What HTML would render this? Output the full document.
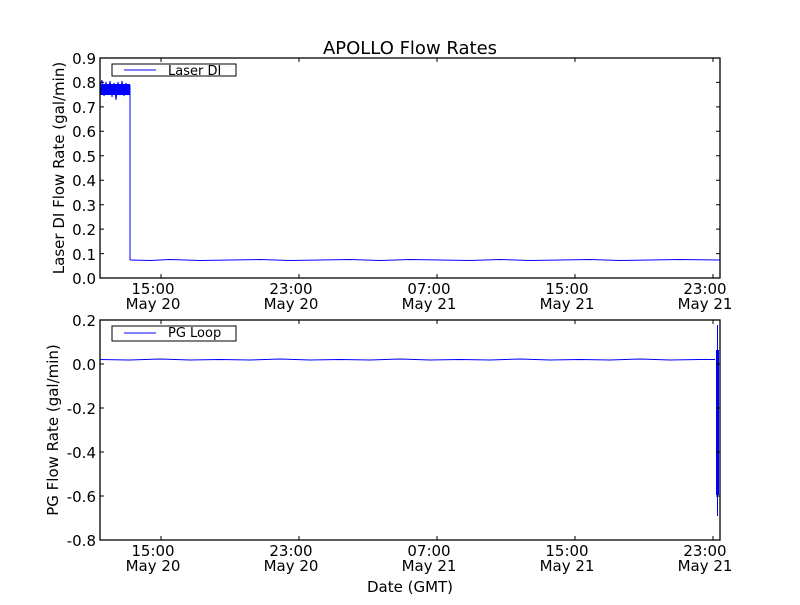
<!DOCTYPE html>
<html><head><style>
body{margin:0;background:#fff}
svg text{font-family:"DejaVu Sans","Liberation Sans",sans-serif;fill:#000}
</style></head><body>
<svg width="800" height="600" viewBox="0 0 800 600" xmlns="http://www.w3.org/2000/svg">
<rect width="800" height="600" fill="#fff"/>
<text x="410" y="54" font-size="18" text-anchor="middle">APOLLO Flow Rates</text>

<!-- axes 1 data -->
<rect x="100" y="84" width="30" height="11" fill="#0000ff"/>
<polyline fill="none" stroke="#0000ff" stroke-width="1" points="100,86 102,80 104,96 106,82 108,94 110,81 112,97 114,83 116,100 118,82 120,95 122,81 124,96 126,83 128,94 130,85 130,260"/>
<polyline fill="none" stroke="#0000ff" stroke-width="1" points="130,260 150,260.5 170,259.5 200,260.5 230,260 260,259.5 290,260.5 320,260 350,259.5 380,260.5 410,259.5 440,260 470,260.5 500,259.5 530,260.5 560,260 590,259.5 620,260.5 650,260 680,259.5 720,260"/>
<!-- axes 2 data -->
<polyline fill="none" stroke="#0000ff" stroke-width="1" points="100,359.5 130,360 160,359 190,360 220,359.5 250,360 280,359 310,360 340,359.5 370,360 400,359 430,360 460,359.5 490,360 520,359 550,360 580,359.5 610,360 640,359 670,360 700,359.5 715,359.5"/>
<rect x="716" y="350" width="3" height="145" fill="#0000ff"/>
<line x1="717.5" y1="325" x2="717.5" y2="516" stroke="#0000ff" stroke-width="1"/>

<g stroke="#000" fill="none" stroke-width="1.3">
<rect x="100" y="58" width="620" height="220"/>
<rect x="100" y="320" width="620" height="220"/>
</g>
<g stroke="#000" stroke-width="1">
<path d="M100 58h4M100 82.4h4M100 106.9h4M100 131.3h4M100 155.8h4M100 180.2h4M100 204.7h4M100 229.1h4M100 253.6h4M100 278h4
M720 58h-4M720 82.4h-4M720 106.9h-4M720 131.3h-4M720 155.8h-4M720 180.2h-4M720 204.7h-4M720 229.1h-4M720 253.6h-4M720 278h-4
M161 278v-4M299 278v-4M437 278v-4M575 278v-4M713 278v-4M161 58v4M299 58v4M437 58v4M575 58v4M713 58v4
M100 320h4M100 364h4M100 408h4M100 452h4M100 496h4M100 540h4
M720 320h-4M720 364h-4M720 408h-4M720 452h-4M720 496h-4M720 540h-4
M161 540v-4M299 540v-4M437 540v-4M575 540v-4M713 540v-4M161 320v4M299 320v4M437 320v4M575 320v4M713 320v4"/>
</g>
<g font-size="15" text-anchor="end">
<text x="96" y="64">0.9</text><text x="96" y="88">0.8</text><text x="96" y="113">0.7</text><text x="96" y="137">0.6</text><text x="96" y="162">0.5</text><text x="96" y="186">0.4</text><text x="96" y="211">0.3</text><text x="96" y="235">0.2</text><text x="96" y="260">0.1</text><text x="96" y="284">0.0</text>
<text x="96" y="326">0.2</text><text x="96" y="370">0.0</text><text x="96" y="414">-0.2</text><text x="96" y="458">-0.4</text><text x="96" y="502">-0.6</text><text x="96" y="546">-0.8</text>
</g>
<g font-size="15" text-anchor="middle">
<text x="153" y="294">15:00</text><text x="291" y="294">23:00</text><text x="429" y="294">07:00</text><text x="567" y="294">15:00</text><text x="705" y="294">23:00</text>
<text x="153" y="309">May 20</text><text x="291" y="309">May 20</text><text x="429" y="309">May 21</text><text x="567" y="309">May 21</text><text x="705" y="309">May 21</text>
<text x="153" y="556">15:00</text><text x="291" y="556">23:00</text><text x="429" y="556">07:00</text><text x="567" y="556">15:00</text><text x="705" y="556">23:00</text>
<text x="153" y="571">May 20</text><text x="291" y="571">May 20</text><text x="429" y="571">May 21</text><text x="567" y="571">May 21</text><text x="705" y="571">May 21</text>
<text x="410" y="592">Date (GMT)</text>
</g>
<text font-size="15" text-anchor="middle" transform="translate(64,168) rotate(-90)">Laser DI Flow Rate (gal/min)</text>
<text font-size="15" text-anchor="middle" transform="translate(58,430) rotate(-90)">PG Flow Rate (gal/min)</text>

<rect x="112" y="64" width="124" height="12" fill="#fff" stroke="#000"/>
<line x1="124" y1="70" x2="156" y2="70" stroke="#0000ff"/>
<text x="168" y="75" font-size="13">Laser DI</text>
<rect x="112" y="326" width="124" height="15" fill="#fff" stroke="#000"/>
<line x1="124" y1="333" x2="156" y2="333" stroke="#0000ff"/>
<text x="168" y="337" font-size="13">PG Loop</text>
</svg>
</body></html>
